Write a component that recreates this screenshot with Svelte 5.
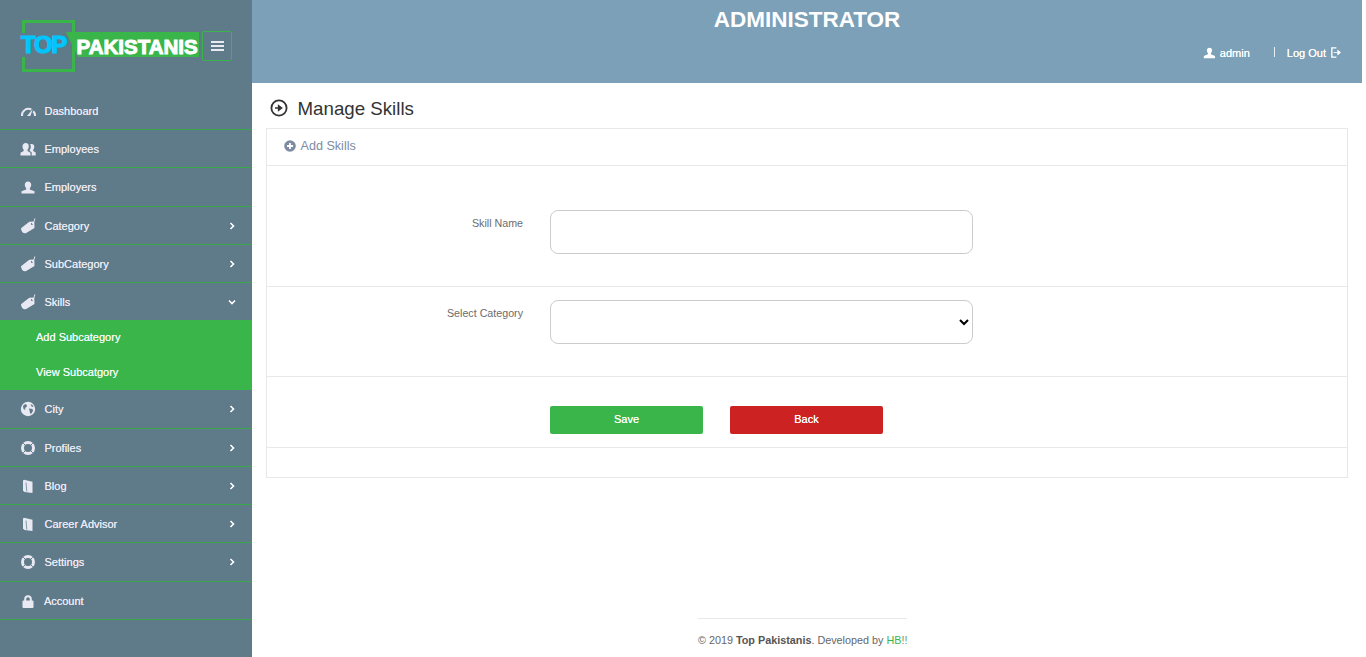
<script>
  const menu = [
    { label: 'Dashboard', icon: 'gauge' },
    { label: 'Employees', icon: 'users' },
    { label: 'Employers', icon: 'user' },
    { label: 'Category', icon: 'tag', arrow: 'right' },
    { label: 'SubCategory', icon: 'tag', arrow: 'right' },
    { label: 'Skills', icon: 'tag', arrow: 'down', open: true },
    { label: 'City', icon: 'globe', arrow: 'right' },
    { label: 'Profiles', icon: 'ring', arrow: 'right' },
    { label: 'Blog', icon: 'book', arrow: 'right' },
    { label: 'Career Advisor', icon: 'book', arrow: 'right' },
    { label: 'Settings', icon: 'ring', arrow: 'right' },
    { label: 'Account', icon: 'lock' }
  ];
</script>

{#snippet icon(name)}
  <svg class="ico" viewBox="0 0 16 16" aria-hidden="true">
    {#if name === 'gauge'}
      <path d="M2 13A6.500 6.500 0 0 1 11.300 6.500" fill="none" stroke="currentColor" stroke-width="2"/>
      <path d="M13.300 8.300A6.500 6.500 0 0 1 15 13" fill="none" stroke="currentColor" stroke-width="2"/>
      <path d="M7 13L12.800 6L10.400 13Z" fill="currentColor"/>
    {:else if name === 'users'}
      <path d="M5.800 2c2 0 3 1.500 3 3.300 0 1.400-.5 2.700-1.300 3.400v1.300l3 1.700V14.500H.5v-2.800l3.200-1.700V8.700C2.900 8 2.500 6.700 2.500 5.300 2.500 3.500 3.800 2 5.800 2z" fill="currentColor"/>
      <path d="M11.800 3c1.600 0 2.500 1.300 2.500 2.800 0 1.200-.5 2.400-1.100 3v1.100l2.500 1.500v3h-4v-3.200l-2-1.200V8.900c.7-.8 1.100-2 1.100-3.200 0-1-.3-1.900-.7-2.400.5-.2 1-.3 1.700-.3z" fill="currentColor"/>
    {:else if name === 'user'}
      <path d="M8 2.500c2 0 3.200 1.400 3.200 3.300 0 1.400-.6 2.700-1.400 3.400v1.300l4.700 1.800V14.500h-13v-2.200l4.700-1.800V9.200C5.400 8.500 4.800 7.200 4.800 5.800 4.800 3.900 6 2.500 8 2.500z" fill="currentColor"/>
    {:else if name === 'tag'}
      <path d="M1 10.200L9.300 3.800l5-.3.200 6.500-8.700 5.200c-2.300.6-4.800-1.500-4.800-5z" fill="currentColor"/>
      <circle cx="11.900" cy="6" r="1" fill="#5f7a88"/>
      <path d="M11.900 6c1.500-1 2.600-3 2.900-5.500" fill="none" stroke="currentColor" stroke-width="1"/>
    {:else if name === 'globe'}
      <circle cx="8" cy="8" r="7.200" fill="currentColor"/>
      <path d="M3 5c1-1.500 2.500-2 3.500-1.500L7 5.500 5 7 5.500 9 3.500 8zM9 7.500l3.500.5.500 2-2 3-1-1-.5-2.500zM10.500 3l2.500 1.500.5 1.500-2-.5z" fill="#5f7a88"/>
    {:else if name === 'ring'}
      <circle cx="8" cy="8" r="5.500" fill="none" stroke="currentColor" stroke-width="3"/>
      <path d="M3.200 3.200L5.800 5.800M12.800 3.200L10.200 5.800M3.200 12.800L5.800 10.200M12.800 12.800L10.200 10.200" stroke="#5f7a88" stroke-width="1"/>
    {:else if name === 'book'}
      <path d="M3 2.500l1-.8 8.500 2.100V15L4.500 14 3 12.500z" fill="currentColor"/>
      <path d="M6 4.500l.8 9" fill="none" stroke="#5f7a88" stroke-width=".9" opacity=".8"/>
    {:else if name === 'lock'}
      <path d="M5.200 8V6a2.800 2.800 0 0 1 5.600 0v2" fill="none" stroke="currentColor" stroke-width="2"/>
      <rect x="2.500" y="7.500" width="11" height="7.500" rx="1" fill="currentColor"/>
    {/if}
  </svg>
{/snippet}

{#snippet menuRow(item)}
  <div class="row" class:open={item.open}>
    <span class="ri">{@render icon(item.icon)}</span>
    <span class="rl" class:acct={item.label === 'Account'}>{item.label}</span>
    {#if item.arrow}
      <svg class="chev" class:down={item.arrow === 'down'} viewBox="0 0 8 8" aria-hidden="true">
        <path d="M2.500 1L5.500 4 2.500 7" fill="none" stroke="currentColor" stroke-width="1.600"/>
      </svg>
    {/if}
  </div>
{/snippet}

<div class="page">
  <aside class="side">
    <div class="brandbar">
      <div class="logo">
        <span class="bracket"></span>
        <span class="banner"></span>
        <span class="top">TOP</span>
        <span class="pak">PAKISTANIS</span>
      </div>
      <button class="burger" aria-label="Toggle menu"><span></span><span></span><span></span></button>
    </div>
    <nav>
      {#each menu as item}
        {@render menuRow(item)}
        {#if item.open}
          <div class="sub">
            <div>Add Subcategory</div>
            <div>View Subcatgory</div>
          </div>
        {/if}
      {/each}
    </nav>
  </aside>

  <main class="main">
    <header class="top-h">
      <h1>ADMINISTRATOR</h1>
      <div class="user">
        <span class="admin">
          <svg class="uic" viewBox="0 0 16 16" aria-hidden="true"><path d="M8 2c2 0 3.200 1.400 3.200 3.300 0 1.400-.6 2.700-1.400 3.400v1.500l5 2V15H1v-2.800l5-2V8.700C5.400 8 4.800 6.700 4.800 5.300 4.800 3.400 6 2 8 2z" fill="currentColor"/></svg>
          admin
        </span>
        <span class="sep"></span>
        <span class="out">Log Out
          <svg class="oic" viewBox="0 0 12 12" aria-hidden="true"><path d="M7 1H2v10h5" fill="none" stroke="currentColor" stroke-width="1.500"/><path d="M4 6H8.500V3.500L11.500 6 8.500 8.500V6" fill="currentColor" stroke="currentColor" stroke-width=".9"/></svg>
        </span>
      </div>
    </header>

    <div class="content">
      <h2>
        <svg class="circ" viewBox="0 0 18 18" aria-hidden="true">
          <circle cx="9" cy="9" r="7.600" fill="none" stroke="currentColor" stroke-width="1.800"/>
          <path d="M5 9h5M8.500 6.500L11.800 9 8.500 11.500z" fill="currentColor" stroke="currentColor" stroke-width="1.300"/>
        </svg>
        Manage Skills
      </h2>

      <section class="card">
        <div class="card-h">
          <svg class="plus" viewBox="0 0 12 12" aria-hidden="true">
            <circle cx="6" cy="6" r="5.800" fill="currentColor"/>
            <path d="M6 3v6M3 6h6" stroke="#fff" stroke-width="1.800"/>
          </svg>
          Add Skills
        </div>
        <div class="frow r1">
          <label for="skill">Skill Name</label>
          <input id="skill" type="text" />
        </div>
        <div class="frow r2">
          <label for="cat">Select Category</label>
          <select id="cat"><option></option></select>
        </div>
        <div class="frow r3">
          <span></span>
          <div class="btns">
            <button class="btn save">Save</button>
            <button class="btn back">Back</button>
          </div>
        </div>
        <div class="r4"></div>
      </section>
    </div>

    <footer>
      <div class="foot">© 2019 <b>Top Pakistanis</b>. Developed by <span class="hb">HB</span><span class="bang">!!</span></div>
    </footer>
  </main>
</div>

<style>
  :global(body) {
    margin: 0;
    background: #fff;
  }
  .page {
    width: 1362px;
    height: 657px;
    display: flex;
    font-family: "Liberation Sans", Arial, sans-serif;
    overflow: hidden;
  }
  .side {
    width: 252px;
    flex: none;
    background: #5f7a88;
    color: #e9e9f4;
  }
  .brandbar {
    height: 91.75px;
    box-sizing: border-box;
    padding: 20px 20px 0 20px;
    display: flex;
    align-items: flex-start;
  }
  .logo {
    position: relative;
    width: 180px;
    height: 52px;
    flex: none;
  }
  .bracket {
    position: absolute;
    left: 2px;
    top: 0;
    width: 53px;
    height: 52px;
    box-sizing: border-box;
    border: 3px solid #39b54a;
  }
  .banner {
    position: absolute;
    left: 46px;
    top: 12px;
    width: 133px;
    height: 25px;
    background: #39b54a;
    clip-path: polygon(0 0, 100% 0, 100% 100%, 12px 100%);
  }
  .top {
    position: absolute;
    left: 0;
    top: 13px;
    width: 46px;
    height: 24px;
    background: #5f7a88;
    font-size: 24px;
    line-height: 24px;
    font-weight: 700;
    color: #00c6ff;
    -webkit-text-stroke: 1.2px #00c6ff;
    letter-spacing: -1.3px;
    padding-left: 1px;
    box-sizing: border-box;
  }
  .pak {
    position: absolute;
    left: 56.5px;
    top: 14.5px;
    font-size: 20.5px;
    line-height: 24px;
    font-weight: 700;
    color: #fff;
    -webkit-text-stroke: 1px #fff;
    white-space: nowrap;
  }
  .burger {
    margin: 11px 0 0 2px;
    width: 31px;
    height: 30px;
    box-sizing: border-box;
    background: transparent;
    border: 1px solid #39b54a;
    border-radius: 2px;
    padding: 0;
    display: flex;
    flex-direction: column;
    align-items: center;
    justify-content: center;
    gap: 2px;
  }
  .burger span {
    width: 13px;
    height: 2px;
    background: #e9e9f4;
  }
  .row {
    height: 38.3px;
    box-sizing: border-box;
    border-bottom: 1px solid #39a84a;
    display: flex;
    align-items: center;
    padding: 0.8px 0 0 20px;
    font-size: 11px;
    text-shadow: 0 0 0.4px #e9e9f4;
  }
  .row.open {
    height: 37px;
    border-bottom: 0;
  }
  .ri {
    width: 16px;
    height: 16px;
    flex: none;
    margin-right: 8.5px;
  }
  .ico {
    display: block;
    width: 16px;
    height: 16px;
  }
  .rl.acct {
    margin-left: -0.6px;
  }
  .chev {
    width: 8px;
    height: 8px;
    margin-left: auto;
    margin-right: 16px;
    color: #fff;
  }
  .chev.down {
    transform: rotate(90deg);
  }
  .sub {
    background: #39b54a;
    color: #f2f8f2;
    font-size: 11px;
    text-shadow: 0 0 0.5px #f2f8f2;
  }
  .sub div {
    height: 35px;
    line-height: 35px;
    padding-left: 36px;
  }
  .main {
    flex: 1;
    min-width: 0;
    display: flex;
    flex-direction: column;
  }
  .top-h {
    height: 83px;
    flex: none;
    background: #7ba0b7;
    color: #fff;
    display: flex;
    flex-direction: column;
  }
  h1 {
    margin: 0;
    padding-top: 6px;
    height: 41px;
    box-sizing: border-box;
    text-align: center;
    font-size: 22.5px;
    line-height: 28px;
    font-weight: 700;
  }
  .user {
    display: flex;
    justify-content: flex-end;
    align-items: center;
    height: 13px;
    margin-top: 5px;
    padding-right: 21px;
    font-size: 11px;
    text-shadow: 0 0 0.5px #fff;
  }
  .admin, .out {
    display: flex;
    align-items: center;
    white-space: pre;
  }
  .uic {
    width: 13px;
    height: 13px;
    margin-right: 1px;
  }
  .sep {
    width: 1px;
    height: 10px;
    background: #e6eef3;
    margin: -2px 12px 0 24px;
  }
  .oic {
    width: 11px;
    height: 11px;
    margin-left: 1px;
  }
  .content {
    padding: 0 14px;
    flex: 1;
  }
  h2 {
    margin: 0;
    height: 45px;
    box-sizing: border-box;
    padding: 15px 0 0 4px;
    display: flex;
    align-items: flex-start;
    font-size: 18.72px;
    line-height: 22px;
    font-weight: 400;
    color: #333;
  }
  .circ {
    width: 18px;
    height: 18px;
    margin: 1px 9.500px 0 0;
  }
  .card {
    border: 1px solid #e8e8e8;
    height: 350px;
    box-sizing: border-box;
  }
  .card-h {
    height: 36px;
    box-sizing: border-box;
    margin-bottom: 1px;
    box-shadow: 0 1px 0 #e8e8e8;
    padding: 0 0 2px 16.5px;
    display: flex;
    align-items: center;
    font-size: 12.6px;
    color: #7d8ca3;
  }
  .plus {
    width: 12px;
    height: 12px;
    margin-right: 5px;
  }
  .frow {
    display: grid;
    grid-template-columns: 256px 423px;
    column-gap: 27px;
    box-sizing: border-box;
    border-bottom: 1px solid #e8e8e8;
  }
  .r1 { height: 121px; padding-top: 44px; }
  .r2 { height: 90px; padding-top: 13px; }
  .r3 { height: 71px; padding-top: 29px; }
  .r4 { height: 29px; }
  label {
    text-align: right;
    font-size: 10.7px;
    line-height: 14px;
    color: #6c6c6c;
    padding-top: 6px;
  }
  input, select {
    width: 423px;
    height: 44px;
    box-sizing: border-box;
    border: 1px solid #ccc;
    border-radius: 8px;
    background: #fff;
    padding: 0 12px;
    font-family: inherit;
  }
  .btns {
    display: flex;
    gap: 27px;
  }
  .btn {
    width: 153px;
    height: 28px;
    border: 0;
    border-radius: 2px;
    color: #fff;
    font-family: inherit;
    font-size: 11px;
    padding: 0 0 2px;
    text-shadow: 0 0 0.5px #fff;
  }
  .save { background: #39b54a; }
  .back { background: #cc2222; }
  footer {
    height: 39px;
    flex: none;
    display: flex;
    justify-content: center;
    padding-right: 9px;
  }
  .foot {
    width: 209px;
    border-top: 1px solid #e8e8e8;
    box-sizing: border-box;
    padding-top: 14px;
    font-size: 10.8px;
    line-height: 14px;
    color: #666;
    white-space: nowrap;
    text-align: center;
  }
  .foot b {
    color: #555;
  }
  .hb { color: #39b54a; }
  .bang { color: #6c9a6c; }
</style>
